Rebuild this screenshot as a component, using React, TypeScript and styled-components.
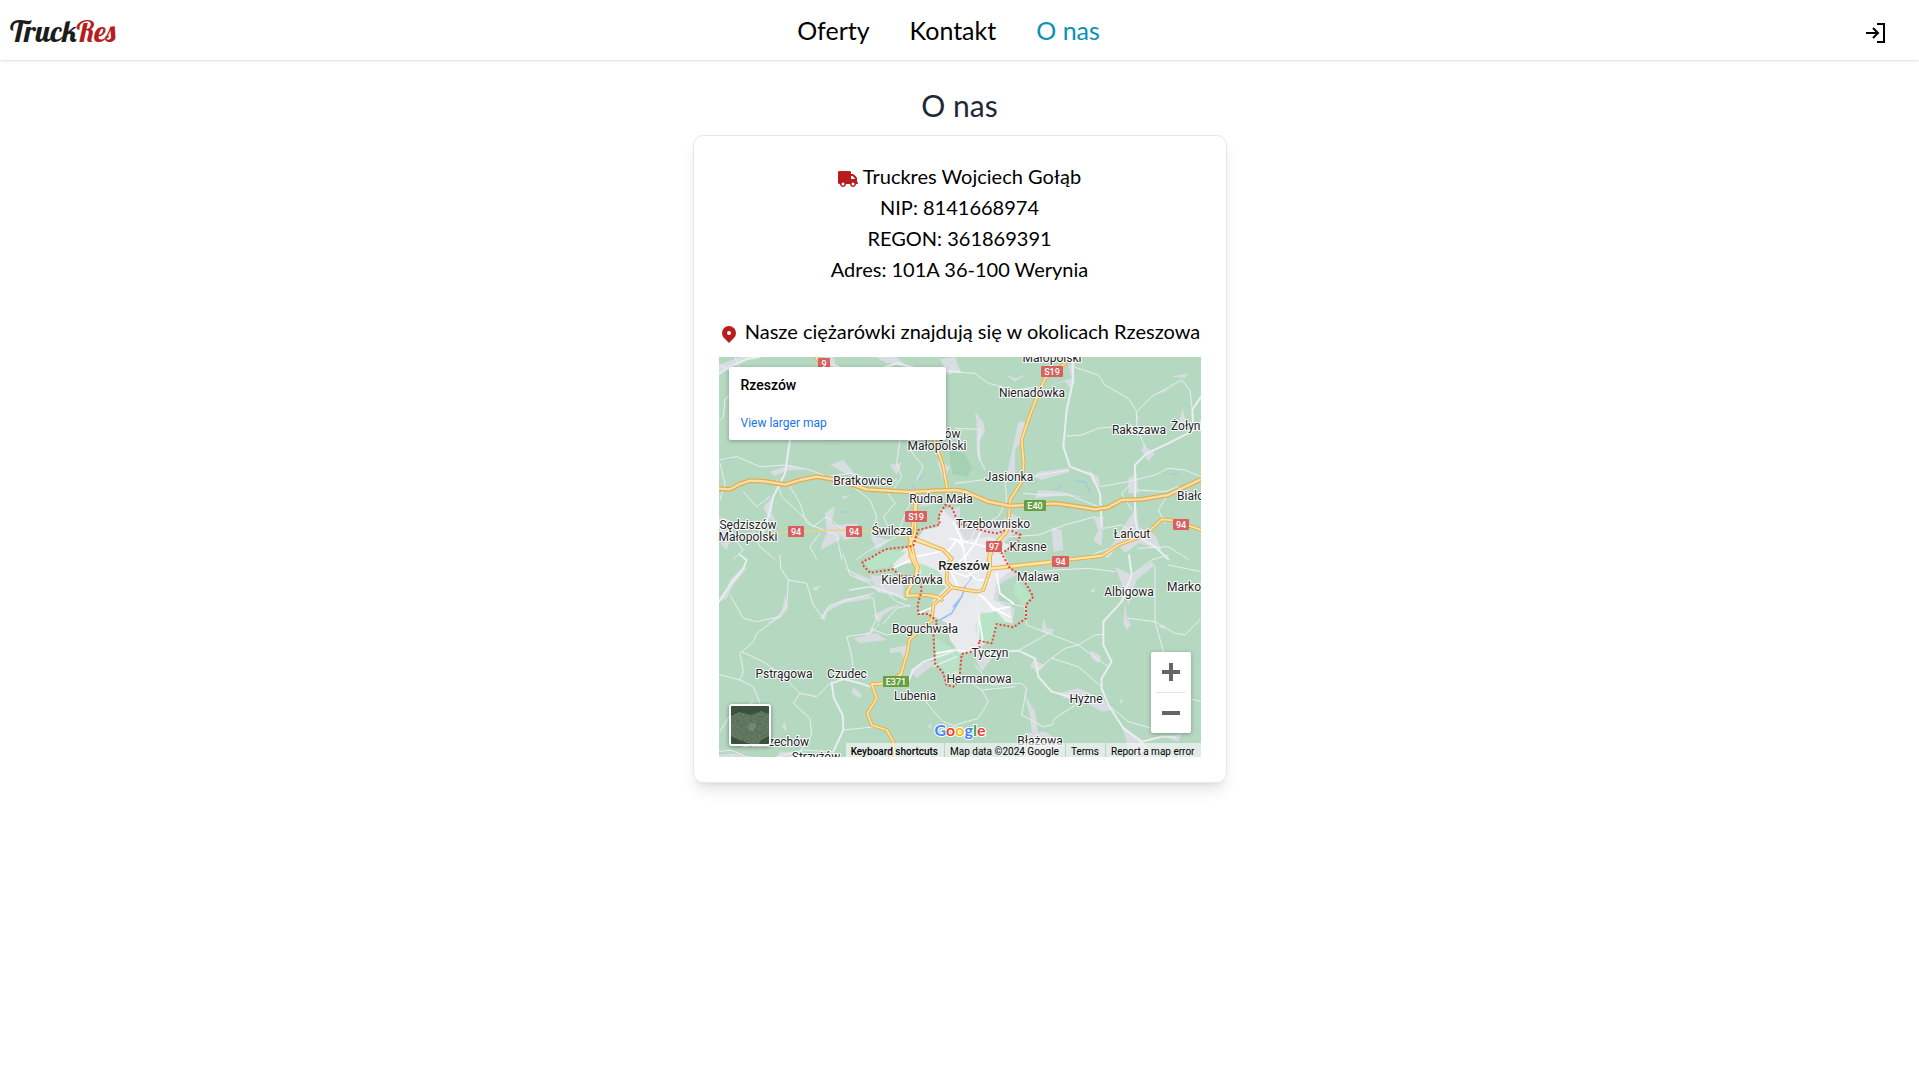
import React from "react";
import styled, { createGlobalStyle } from "styled-components";
import { FaTruck } from "react-icons/fa6";
import { HiLocationMarker } from "react-icons/hi";

const GlobalStyle = createGlobalStyle`
  *, *::before, *::after { box-sizing: border-box; }
  body {
    margin: 0;
    background: #fff;
    color: #000;
    font-family: Lato, "Liberation Sans", sans-serif;
  }
  h1, h2, p { margin: 0; font-weight: 400; }
  a { color: inherit; text-decoration: none; }
  button { border: 0; padding: 0; background: none; font: inherit; color: inherit; cursor: pointer; }
`;

const Header = styled.header`
  display: flex;
  align-items: center;
  height: 60px;
  padding: 0 32px 0 10px;
  box-shadow: 0 1px 3px rgba(0, 0, 0, 0.1), 0 1px 2px -1px rgba(0, 0, 0, 0.1);
`;

const HeaderSide = styled.div<{ $end?: boolean }>`
  display: flex;
  flex: 1;
  justify-content: ${(p) => (p.$end ? "flex-end" : "flex-start")};
`;

const Logo = styled.a`
  padding-top: 2px;
  font-family: Lobster, "Liberation Serif", serif;
  font-size: 30px;
  line-height: 36px;
  color: #1c1c1c;
`;

const LogoAccent = styled.span`
  color: #b91c1c;
`;

const Nav = styled.nav`
  display: flex;
  gap: 40px;
`;

const NavLink = styled.a<{ $active?: boolean }>`
  font-size: 25px;
  line-height: 32px;
  color: ${(p) => (p.$active ? "#0891b2" : "#000")};
`;

const LoginButton = styled.button`
  display: flex;
  padding-top: 6px;
`;

const Main = styled.main`
  display: flex;
  flex-direction: column;
  align-items: center;
  padding: 27px 16px;
`;

const Title = styled.h1`
  font-size: 30px;
  line-height: 36px;
  color: #1f2937;
`;

const Card = styled.section`
  max-width: 100%;
  margin-top: 12px;
  padding: 25px;
  border: 1px solid #e5e7eb;
  border-radius: 10px;
  box-shadow: 0 10px 15px -3px rgba(0, 0, 0, 0.1), 0 4px 6px -4px rgba(0, 0, 0, 0.1);
`;

const Details = styled.div`
  margin-bottom: 31px;
`;

const Line = styled.p<{ $gap?: number }>`
  display: flex;
  align-items: center;
  justify-content: center;
  gap: ${(p) => p.$gap ?? 0}px;
  font-size: 20px;
  line-height: 31px;

  svg { flex: none; margin-top: 4px; color: #b91c1c; }
`;

const MapFrame = styled.div`
  position: relative;
  height: 400px;
  margin-top: 10px;
  overflow: hidden;
  background: #b5d8c1;
  font-family: Roboto, "Liberation Sans", sans-serif;
`;

const MapCanvas = styled.svg`
  display: block;
  width: 100%;
  height: 100%;
`;

const Place = styled.text<{ $city?: boolean }>`
  font-size: ${(p) => (p.$city ? 13 : 12)}px;
  font-weight: ${(p) => (p.$city ? 500 : 400)};
  fill: #202124;
  stroke: #fff;
  stroke-width: 2px;
  stroke-linejoin: round;
  paint-order: stroke;
`;

const ShieldText = styled.text`
  font-size: 9px;
  font-weight: 500;
  fill: #fff;
  text-anchor: middle;
`;

const GoogleMark = styled.text`
  font-family: Lato, sans-serif;
  font-size: 16px;
  font-weight: 700;
  text-anchor: middle;
  stroke: #fff;
  stroke-width: 2px;
  paint-order: stroke;
`;

const InfoBox = styled.div`
  position: absolute;
  top: 10px;
  left: 10px;
  display: flex;
  flex-direction: column;
  justify-content: space-between;
  align-items: flex-start;
  width: 217px;
  height: 73px;
  padding: 10px 12px 9px;
  border-radius: 2px;
  background: #fff;
  box-shadow: 0 1px 4px rgba(0, 0, 0, 0.3);
`;

const InfoTitle = styled.h2`
  font-size: 14px;
  font-weight: 500;
  line-height: 16px;
`;

const InfoLink = styled.a`
  font-size: 12px;
  line-height: 16px;
  color: #1a73e8;
`;

const ZoomControls = styled.div`
  position: absolute;
  right: 10px;
  bottom: 24px;
  display: flex;
  flex-direction: column;
  width: 40px;
  border-radius: 2px;
  background: #fff;
  box-shadow: 0 1px 4px rgba(0, 0, 0, 0.3);
`;

const ZoomButton = styled.button`
  display: grid;
  place-items: center;
  height: 40px;
`;

const ZoomDivider = styled.span`
  height: 1px;
  margin: 0 5px;
  background: #e6e6e6;
`;

const SatelliteButton = styled.button`
  position: absolute;
  left: 10px;
  bottom: 11px;
  width: 42px;
  height: 42px;
  border: 2px solid #fff;
  border-radius: 3px;
  overflow: hidden;
  box-shadow: 0 1px 4px rgba(0, 0, 0, 0.4);

  svg { display: block; }
`;

const Attribution = styled.div`
  position: absolute;
  right: 0;
  bottom: 0;
  display: flex;
  align-items: flex-start;
  gap: 1px;
  height: 14px;
  font-size: 10px;
  line-height: 17px;
  white-space: nowrap;

  > * { padding: 0 6px 0 5px; background: rgba(245, 245, 245, 0.7); }
`;

const ShortcutsButton = styled.button`
  font-weight: 500;
`;

const places: [string, number, number, ("start" | "end")?][] = [
  ["Głogów", 221, 81],
  ["Małopolski", 218, 93],
  ["Bratkowice", 144, 128],
  ["Rudna Mała", 222, 146],
  ["Sędziszów", 29, 172],
  ["Małopolski", 29, 184],
  ["Świlcza", 173, 178],
  ["Małopolski", 333, 5],
  ["Nienadówka", 313, 40],
  ["Rakszawa", 420, 77],
  ["Żołynia", 452, 73, "start"],
  ["Jasionka", 290, 124],
  ["Białobrzegi", 458, 143, "start"],
  ["Trzebownisko", 274, 171],
  ["Łańcut", 413, 181],
  ["Krasne", 309, 194],
  ["Kielanówka", 193, 227],
  ["Malawa", 319, 224],
  ["Albigowa", 410, 239],
  ["Markowa", 448, 234, "start"],
  ["Boguchwała", 206, 276],
  ["Tyczyn", 271, 300],
  ["Hermanowa", 260, 326],
  ["Lubenia", 196, 343],
  ["Pstrągowa", 65, 321],
  ["Czudec", 128, 321],
  ["Dobrzechów", 90, 389, "end"],
  ["Strzyżów", 97, 404],
  ["Hyżne", 367, 346],
  ["Błażowa", 321, 388],
];

const shields: [string, number, number, number, string][] = [
  ["9", 99, 1, 12, "#d9605f"],
  ["S19", 186, 154, 22, "#d9605f"],
  ["94", 69, 169, 16, "#d9605f"],
  ["94", 127, 169, 16, "#d9605f"],
  ["S19", 322, 9, 22, "#d9605f"],
  ["E40", 305, 143, 22, "#689f43"],
  ["94", 454, 162, 16, "#d9605f"],
  ["97", 267, 184, 16, "#d9605f"],
  ["94", 333, 199, 17, "#d9605f"],
  ["E371", 164, 319, 26, "#689f43"],
];

/* Map geometry is kept in tiles, each with its own origin, at three units per pixel. */
type Tile = { x: number; y: number; built: string; minor: string; local: string; major: string };

const tiles: Tile[] = [
  {
    x: -27,
    y: -21,
    built:
      "M27 66L60 50 120 25 150 21 90 21 27 44ZM345 21L372 21 378 60 362 70ZM500 21L560 21 585 45 530 40ZM690 28L735 21 750 60 715 75ZM180 365L240 345 285 358 230 362 195 378ZM360 345L400 330 435 372 410 372ZM540 345L575 338 560 375ZM395 440L425 434 400 448ZM160 470L190 440 185 490 200 520 175 505ZM345 490L375 468 365 520 400 535 390 570 330 600 350 550ZM27 500L60 510 70 555 30 560ZM385 525L440 520 455 560 400 570ZM680 330L720 350 700 390ZM480 555L540 570 500 600ZM625 470L660 440 665 465ZM30 580L60 575 50 600ZM690 480L750 470 750 630 640 630 620 560 690 545Z",
    minor:
      "M27 72L60 50 110 28 150 21M370 45L440 70 500 60 560 40 640 60 750 65M240 270L225 370 190 440 175 500 160 545",
    local:
      "M100 425L140 470 180 440M200 390L215 440 280 500 310 530 350 500 400 540M27 45L60 60 75 110 45 150 40 200 27 215M75 21L90 60 60 90M27 330L80 320 150 350 230 345 300 360 350 380 420 370 500 395 560 390M240 410L270 460 290 520 380 555 395 628M430 410L480 450 500 500 490 545M130 545L150 590 195 628M60 550L100 600 70 628M330 550L300 590 320 628M530 425L555 460 520 500 540 540M570 270L560 340 575 380 550 420M620 430L590 480 560 560 480 600 440 628M600 300L640 350 620 390M30 340L45 400 30 450",
    major: "M318 21L345 60M650 200L680 290 700 350 712 420M618 430L613 500 600 565 615 628",
  },
  {
    x: 708,
    y: -21,
    built:
      "M60 185L85 215 90 245 72 275 80 340 65 310 65 220ZM190 215L210 215 200 270 180 300 180 380 150 400 165 330ZM150 72L182 85 215 72 180 95ZM250 365L340 355 345 365 260 390 235 380ZM340 45L360 40 350 120 330 95 270 110 350 85ZM540 185L555 240 545 270 550 200ZM585 138L640 118 690 95 630 125ZM683 175L695 225 670 220ZM565 285L600 310 580 335 560 300ZM250 420L320 425 395 445 330 435 240 445ZM400 360L430 380 435 410 415 400ZM415 500L445 500 440 590 415 570 430 540ZM520 385L545 370 550 430 520 430ZM525 500L545 470 550 530 600 555 620 600 550 580 510 610 490 585 460 625 450 620 480 570ZM290 530L320 540 325 600 295 605ZM650 80L700 70 690 83ZM0 530L80 510 130 520 170 490 215 520 165 560 100 630 0 630Z",
    minor:
      "M352 21L355 90 335 180 325 290 345 350 410 375 435 430 440 530M738 230L640 280 575 310 540 345 540 500 550 560 600 590 640 628M738 140L712 180 715 235",
    local:
      "M0 400L80 390 150 385 230 380 340 360M150 385L155 450 130 500 60 540 20 628M0 66L60 70 100 100 180 120 250 110M355 50L430 75 450 105 520 145 545 185 545 235 570 290M545 185L590 140 680 90 705 120 712 180M335 258L380 255 430 235 530 225M0 235L75 238 70 320 90 360M435 410L520 395 600 375 640 355 690 360 738 380M545 420L630 425 670 410M640 430L610 480 630 520M445 535L500 525 530 545M165 560L250 555 330 525 420 500M480 590L420 610 400 628M205 430L260 435 340 435 430 470M550 595L640 590 700 628M530 400L500 430 530 480",
    major:
      "M330 40L270 85 250 130 225 195 200 270 206 340 200 395 165 450 162 500 155 545 120 585 100 630M350 628L440 618 490 585 570 555 620 508 660 512 738 540",
  },
  {
    x: -27,
    y: 594,
    built:
      "M60 75L100 35 110 40 70 90 50 130 27 140 45 120ZM225 120L235 160 210 190 165 210 215 175ZM305 100L335 90 318 108ZM330 190L350 160 400 132 480 120 490 130 400 145 352 170 345 195ZM490 180L540 155 575 148 520 180 495 225 455 262 470 235 510 210ZM430 395L455 420 450 430 425 415ZM225 500L230 530 215 515ZM540 280L600 270 590 320 570 290 540 295ZM600 345L640 320 680 320 620 370ZM210 590L260 590 300 606 200 606ZM27 600L60 595 140 606 27 606ZM400 35L450 60 510 85 450 75ZM480 60L580 70 580 130 500 110ZM650 510L665 508 662 522ZM430 250L500 235 530 255 450 265Z",
    minor:
      "M27 140L60 90 100 40 110 15 90 0M365 385L372 430 398 480 400 525 370 590M750 280L700 300 640 320 610 345 590 390M365 385L400 372 450 385 480 395",
    local:
      "M335 190L360 150 430 130 490 115M210 0L212 40 235 75 230 150 200 190 140 235 130 260 90 295 100 350 90 375 27 358M235 75L290 85 310 150 340 190M60 120L100 190 140 200 210 185M95 290L160 320 215 360 270 415 320 425 365 380M90 375L130 395 150 445M270 415L250 445 300 490 305 540 270 590M400 525L450 520 500 515M490 130L500 190 480 235 410 245 425 300 430 350M400 0L420 60 480 85 510 110M510 90L560 140 600 155M480 220L530 240 590 230M27 590L60 585 100 600M200 606L280 585 370 590M600 150L560 160 520 205M640 430L680 480 700 500 750 520M30 530L60 480 130 440",
    major: "M600 0L620 40 615 70 590 110 590 122 650 120 690 130M575 355L530 385 485 388 500 430 472 475 485 510 530 525 550 560 555 606",
  },
  {
    x: 708,
    y: 594,
    built:
      "M0 0L150 0 180 60 130 90 130 140 180 160 175 190 110 175 80 210 90 270 0 300ZM50 285L130 285 95 330 80 350ZM235 315L270 330 250 350 225 335ZM265 190L275 220 298 222 290 240 260 230ZM405 108L420 98 418 112ZM480 35L530 60 590 20 600 30 545 75 520 150 510 110ZM510 140L515 185 528 210 515 225 505 205ZM205 410L240 470 250 540 230 530 225 480ZM310 415L370 400 440 430 470 465 440 470 390 440 330 430ZM495 430L505 438 495 448ZM610 215L632 210 625 222ZM405 285L440 305 430 325 410 310ZM640 550L680 535 670 560ZM210 535L270 530 320 560 300 606 200 606ZM500 510L560 555 600 606 520 580ZM190 55L250 60 320 45 240 70Z",
    minor:
      "M130 290L190 287 240 310 250 365 290 410 360 430M522 0L530 60 500 140 445 200 445 270 470 320 440 370 440 400 460 450 505 520 560 560 540 606M560 560L620 545 660 545M68 50L70 290",
    local:
      "M180 60L300 45 400 40 480 50M130 140L210 155 215 210 280 235 370 270 420 240 445 238M190 287L280 235M240 350L290 310 330 280 370 270M290 310L370 335 440 395M370 270L410 300 460 335M60 330L110 390 200 385 215 400 200 480 265 515 290 510 300 490 330 470 370 445M0 350L80 405 180 395M80 405L100 440 70 490 0 510M600 35L600 200 620 270 625 290M520 190L600 200 660 235 690 240 738 190M640 30L738 50M460 450L520 500 590 520M560 560L590 600M738 440L700 430M530 60L590 15 640 0",
    major: "M105 40L300 18 440 2M105 40L105 0",
  },
];

const motorway =
  "M0 395L33 397 63 381 93 371 138 373 198 383 243 369 293 359 343 367 393 381 443 397 503 401 573 405 653 401 708 399 738 404 808 434 873 447 1008 439 1058 446 1128 457 1168 451 1208 429 1268 427 1348 414 1388 394 1446 367";

const cityRoads =
  "M475 90L465 130 430 165 418 190 420 240 400 300 380 305 305 292 290 275 292 225 305 205 280 180 195 145M200 20L195 130 180 160 178 180 205 230 195 270 175 300 172 318 230 315 262 320 275 330M305 292L250 345 245 390 200 430 178 450 172 490 150 560 130 578 65 582M420 237L600 218";

const cityBorder =
  "M485 122L512 135 500 160 455 190 480 235 505 250 530 285 550 320 528 345 528 385 490 412 440 402 425 460 385 452 390 478 335 492 328 570 310 590 290 585 280 550 255 520 250 430 262 395 235 372 205 372 203 345 215 300 210 262 150 258 130 238 60 248 38 225 38 215 60 205 105 178 190 168 205 120 270 103 265 80 285 45 305 50 325 100 410 125 440 130 465 122";

function RegionMap() {
  return (
    <MapCanvas viewBox="0 0 482 400" preserveAspectRatio="xMidYMid slice" role="img" aria-label="Mapa okolic Rzeszowa">
      <g transform="scale(0.33333)" fill="none" strokeLinejoin="round" strokeLinecap="round">
        <path d="M690 275L735 290 760 330 745 360 700 350Z" fill="#a5d0b1" />
        {tiles.map((t) => (
          <path key={`${t.x},${t.y}`} d={t.built} transform={`translate(${t.x} ${t.y})`} fill="#d8dde2" />
        ))}
        <g transform="translate(393 399)">
          <path
            d="M275 55L315 95 345 150 420 140 480 165 460 190 485 240 440 275 430 330 480 355 490 400 440 390 395 365 375 410 385 450 400 480 330 490 300 450 290 400 235 370 250 330 290 290 210 250 200 215 130 230 130 200 200 150 220 120 265 110Z"
            fill="#e8eaed"
          />
          <path
            d="M410 150L460 160 450 190 430 180ZM40 215L110 180 170 185 120 230 60 240ZM210 220L260 240 280 260 240 290 215 270ZM500 270L545 320 520 345 490 310ZM395 370L440 365 470 400 440 405 425 455 385 450 380 400ZM255 440L330 490 325 570 300 590 280 540 255 510Z"
            fill="#b9e3c6"
          />
          <path d="M345 290L335 320 320 345 305 370 270 390M335 320L310 350" stroke="#9dc0f2" strokeWidth="5" />
          <path d="M375 240L360 270 345 290" stroke="#9dc0f2" strokeWidth="3" />
          <path
            d="M310 95L335 150 345 200 300 240 330 300M345 200L375 160 400 110M300 145L390 165 420 175M340 170L320 150 290 190M385 230L383 300 383 360 400 460M383 240L350 260 310 245M345 200L350 240 380 270 420 270M440 250L450 310 490 340M383 310L440 360 480 380M130 235L200 200 290 180M205 370L250 350M400 320L430 360 480 350M260 490L310 480 360 485"
            stroke="#fff"
            strokeWidth="5"
          />
          <path d="M0 300L60 290 130 310 170 330M250 530L320 500" stroke="#e9eef0" strokeWidth="4" />
        </g>
        <path
          d="M245 368L262 360M235 374L250 370M575 385L590 395M600 370L618 350M365 464L380 466M15 308L35 305M320 248L345 250M1070 372L1100 376 1112 405M1010 400L1030 385M1355 350L1375 352"
          stroke="#9dc0f2"
          strokeWidth="3"
        />
        {tiles.map((t) => (
          <g key={`${t.x},${t.y}`} transform={`translate(${t.x} ${t.y})`} stroke="#e9eef0">
            <path d={t.local} strokeWidth="3" />
            <path d={t.minor} strokeWidth="6" />
          </g>
        ))}
        <path d="M173 527L363 519 463 521 573 544" stroke="#f3cf85" strokeWidth="4" />
        {[
          { color: "#eab14a", width: 11 },
          { color: "#fbe6a8", width: 5 },
        ].map((pass) => (
          <g key={pass.color} stroke={pass.color} strokeWidth={pass.width}>
            {tiles.map((t) => (
              <path key={`${t.x},${t.y}`} d={t.major} transform={`translate(${t.x} ${t.y})`} />
            ))}
            <path d={cityRoads} transform="translate(393 399)" />
            <path d="M573 544L673 579 698 607" />
          </g>
        ))}
        <path d={motorway} stroke="#e6aa42" strokeWidth="14" />
        <path d={motorway} stroke="#f6dfae" strokeWidth="7" />
        <path
          d={cityBorder}
          transform="translate(393 399)"
          stroke="#ea4335"
          strokeWidth="6"
          strokeDasharray="6 6"
          strokeLinecap="butt"
        />
      </g>
      {shields.map(([label, x, y, w, color], i) => (
        <g key={i}>
          <rect x={x} y={y} width={w} height="11" rx="1" fill={color} />
          <ShieldText x={x + w / 2} y={y + 9}>{label}</ShieldText>
        </g>
      ))}
      {places.map(([name, x, y, anchor], i) => (
        <Place key={i} x={x} y={y} textAnchor={anchor ?? "middle"}>{name}</Place>
      ))}
      <Place $city x="245" y="213" textAnchor="middle">Rzeszów</Place>
      <GoogleMark x="241" y="379">
        <tspan fill="#4285f4">G</tspan>
        <tspan fill="#ea4335">o</tspan>
        <tspan fill="#fbbc04">o</tspan>
        <tspan fill="#4285f4">g</tspan>
        <tspan fill="#34a853">l</tspan>
        <tspan fill="#ea4335">e</tspan>
      </GoogleMark>
    </MapCanvas>
  );
}

function SatelliteThumb() {
  return (
    <svg width="38" height="38" viewBox="0 0 38 38" aria-hidden="true">
      <defs>
        <filter id="terrain" x="0" y="0" width="100%" height="100%">
          <feTurbulence type="fractalNoise" baseFrequency="0.5" numOctaves="3" seed="4" />
          <feColorMatrix values="0.5 0 0 0 0.05  0.5 0 0 0 0.12  0.4 0 0 0 0.06  0 0 0 0 1" />
        </filter>
      </defs>
      <rect width="38" height="38" fill="#3f5741" />
      <rect width="38" height="38" filter="url(#terrain)" opacity="0.4" />
      <path d="M0 0H38V8L30 5 20 9 8 6 0 10ZM0 30L8 34 20 38H0ZM30 34L38 30V38H28Z" fill="#1f3a26" opacity="0.6" />
      <path d="M18 18L24 17 25 22 21 26 17 23Z" fill="#8a948e" opacity="0.5" />
    </svg>
  );
}

export default function App() {
  return (
    <>
      <GlobalStyle />
      <Header>
        <HeaderSide>
          <Logo href="#">
            Truck<LogoAccent>Res</LogoAccent>
          </Logo>
        </HeaderSide>
        <Nav>
          <NavLink href="#oferty">Oferty</NavLink>
          <NavLink href="#kontakt">Kontakt</NavLink>
          <NavLink href="#o-nas" $active aria-current="page">O nas</NavLink>
        </Nav>
        <HeaderSide $end>
          <LoginButton type="button" aria-label="Zaloguj">
            <svg width="22" height="22" viewBox="0 0 22 22" fill="none" stroke="#000" strokeWidth="2" aria-hidden="true">
              <path d="M12 2H19V20H12" />
              <path d="M1 11H13M8 6L13 11L8 16" />
            </svg>
          </LoginButton>
        </HeaderSide>
      </Header>
      <Main>
        <Title>O nas</Title>
        <Card>
          <Details>
            <Line $gap={5}>
              <FaTruck size={20} />
              Truckres Wojciech Gołąb
            </Line>
            <Line>NIP: 8141668974</Line>
            <Line>REGON: 361869391</Line>
            <Line>Adres: 101A 36-100 Werynia</Line>
          </Details>
          <Line $gap={6}>
            <HiLocationMarker size={20} />
            Nasze ciężarówki znajdują się w okolicach Rzeszowa
          </Line>
          <MapFrame>
            <RegionMap />
            <InfoBox>
              <InfoTitle>Rzeszów</InfoTitle>
              <InfoLink href="#map">View larger map</InfoLink>
            </InfoBox>
            <SatelliteButton type="button" aria-label="Show satellite imagery">
              <SatelliteThumb />
            </SatelliteButton>
            <ZoomControls>
              <ZoomButton type="button" aria-label="Zoom in">
                <svg width="18" height="18" viewBox="0 0 18 18" aria-hidden="true">
                  <path d="M7 0h4v7h7v4h-7v7H7v-7H0V7h7z" fill="#666" />
                </svg>
              </ZoomButton>
              <ZoomDivider />
              <ZoomButton type="button" aria-label="Zoom out">
                <svg width="18" height="18" viewBox="0 0 18 18" aria-hidden="true">
                  <path d="M0 7h18v4H0z" fill="#666" />
                </svg>
              </ZoomButton>
            </ZoomControls>
            <Attribution>
              <ShortcutsButton type="button">Keyboard shortcuts</ShortcutsButton>
              <span>Map data ©2024 Google</span>
              <a href="#terms">Terms</a>
              <a href="#report">Report a map error</a>
            </Attribution>
          </MapFrame>
        </Card>
      </Main>
    </>
  );
}
